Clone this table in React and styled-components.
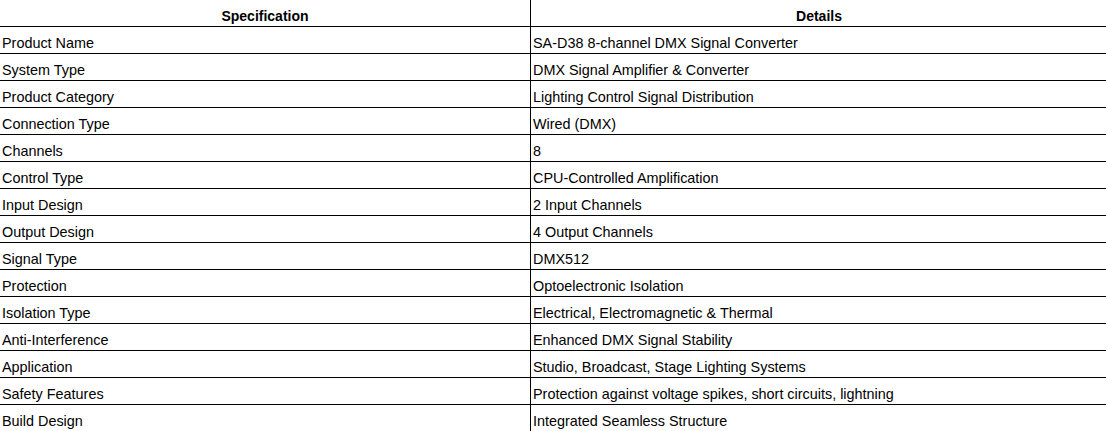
import React from "react";
import styled, { createGlobalStyle } from "styled-components";

const Global = createGlobalStyle`
  html, body { margin: 0; padding: 0; background: #fff; overflow: hidden; }
  body { font-family: "Liberation Sans", Arial, sans-serif; color: #000; }
`;

const Wrap = styled.div`
  margin: -1px 0 0 -1px;
`;

const Table = styled.table`
  width: 1108px;
  border-collapse: collapse;
  table-layout: fixed;
`;

const Col = styled.col`
  width: ${(p) => p.$w}px;
`;

const Th = styled.th`
  border: 1px solid #000;
  height: 27px;
  padding: 7px 2px 1px;
  font-size: 14px;
  font-weight: bold;
  text-align: center;
  vertical-align: middle;
  box-sizing: border-box;
  line-height: 16px;
`;

const Td = styled.td`
  border: 1px solid #000;
  height: 27px;
  padding: 7px 2px 1px;
  font-size: 14.4px;
  text-align: left;
  vertical-align: middle;
  line-height: 16px;
  box-sizing: border-box;
`;

const rows = [
  ["Product Name", "SA-D38 8-channel DMX Signal Converter"],
  ["System Type", "DMX Signal Amplifier & Converter"],
  ["Product Category", "Lighting Control Signal Distribution"],
  ["Connection Type", "Wired (DMX)"],
  ["Channels", "8"],
  ["Control Type", "CPU-Controlled Amplification"],
  ["Input Design", "2 Input Channels"],
  ["Output Design", "4 Output Channels"],
  ["Signal Type", "DMX512"],
  ["Protection", "Optoelectronic Isolation"],
  ["Isolation Type", "Electrical, Electromagnetic & Thermal"],
  ["Anti-Interference", "Enhanced DMX Signal Stability"],
  ["Application", "Studio, Broadcast, Stage Lighting Systems"],
  ["Safety Features", "Protection against voltage spikes, short circuits, lightning"],
  ["Build Design", "Integrated Seamless Structure"],
];

export default function App() {
  return (
    <>
      <Global />
      <Wrap>
        <Table>
          <colgroup>
            <Col $w={531} />
            <Col $w={577} />
          </colgroup>
          <thead>
            <tr>
              <Th>Specification</Th>
              <Th>Details</Th>
            </tr>
          </thead>
          <tbody>
            {rows.map(([a, b]) => (
              <tr key={a}>
                <Td>{a}</Td>
                <Td>{b}</Td>
              </tr>
            ))}
          </tbody>
        </Table>
      </Wrap>
    </>
  );
}
